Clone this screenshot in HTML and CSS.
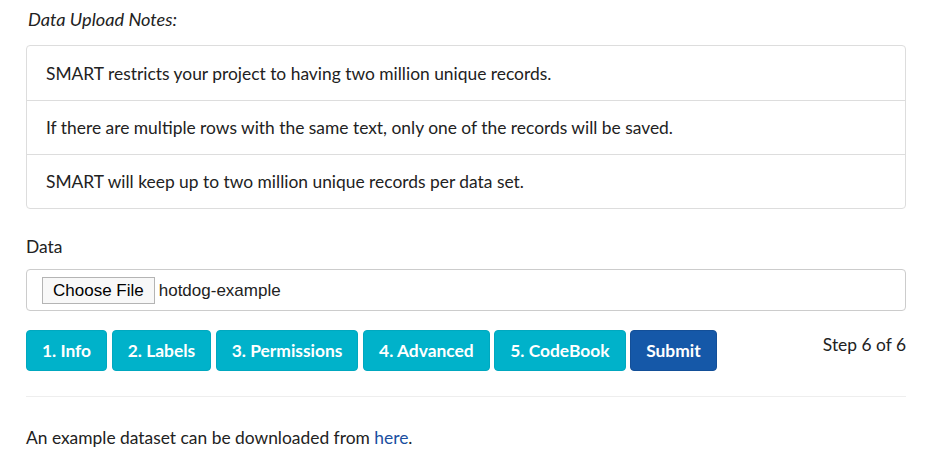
FILE: index.html
```html
<!DOCTYPE html>
<html>
<head>
<meta charset="utf-8">
<link rel="stylesheet" href="styles.css">
</head>
<body>
<div class="page">
  <p class="notes-title">Data Upload Notes:</p>
  <ul class="notes">
    <li class="note">SMART restricts your project to having two million unique records.</li>
    <li class="note">If there are multiple rows with the same text, only one of the records will be saved.</li>
    <li class="note">SMART will keep up to two million unique records per data set.</li>
  </ul>
  <div class="field-label">Data</div>
  <div class="file-input">
    <span class="file-btn">Choose File</span>
    <span class="file-name">hotdog-example</span>
  </div>
  <div class="steps">
    <div class="step-buttons">
      <button class="btn btn-info">1. Info</button>
      <button class="btn btn-info">2. Labels</button>
      <button class="btn btn-info">3. Permissions</button>
      <button class="btn btn-info">4. Advanced</button>
      <button class="btn btn-info">5. CodeBook</button>
      <button class="btn btn-primary">Submit</button>
    </div>
    <div class="step-count">Step 6 of 6</div>
  </div>
  <hr class="divider">
  <p class="example">An example dataset can be downloaded from <a class="link" href="#">here</a>.</p>
</div>
</body>
</html>
```
FILE: styles.css
```css
* { box-sizing: border-box; }
html, body { margin: 0; padding: 0; background: #fff; }
body {
  font-family: Lato, "Open Sans", sans-serif;
  font-size: 17.4px;
  line-height: 23px;
  color: #222;
}
.page { padding: 8px 26px 0 26px; }
.notes-title { margin: 0 0 0 2px; font-style: italic; font-size: 18.2px; }
.notes {
  list-style: none;
  margin: 14px 0 0 0;
  padding: 0;
  border: 1px solid #ddd;
  border-radius: 4px;
}
.note {
  padding: 15px 19px;
  border-top: 1px solid #ddd;
}
.note:first-child { border-top: none; padding-top: 16px; }
.field-label { margin-top: 26px; }
.file-input {
  margin-top: 11px;
  height: 42px;
  border: 1px solid #ccc;
  border-radius: 4px;
  padding: 7px 15px;
  display: flex;
  align-items: center;
  gap: 4px;
  font-family: "Liberation Sans", Arial, sans-serif;
  font-size: 17px;
  color: #000;
}
.file-btn {
  height: 27px;
  display: flex;
  align-items: center;
  padding: 0 10px;
  border: 1px solid #b4b4b4;
  background: #f8f8f8;
  color: #000;
}
.file-name { color: #222; }
.steps {
  margin-top: 19px;
  display: flex;
  justify-content: space-between;
  align-items: flex-start;
}
.step-buttons { display: flex; gap: 4.6px; }
.btn {
  font-family: Lato, sans-serif;
  font-weight: bold;
  font-size: 17.4px;
  height: 41px;
  padding: 0 15px;
  border: 1px solid transparent;
  border-radius: 4px;
  color: #fff;
  margin: 0;
  cursor: pointer;
}
.btn-info { background: #00b2ca; border-color: #00a8bf; }
.btn-primary { background: #1558a8; border-color: #134f98; }
.step-count { padding-top: 3px; }
.divider {
  margin: 25px 0 0 0;
  border: 0;
  border-top: 1px solid #eee;
}
.example { margin: 29px 0 0 0; }
.link { color: #1a4fa0; text-decoration: none; }
```
